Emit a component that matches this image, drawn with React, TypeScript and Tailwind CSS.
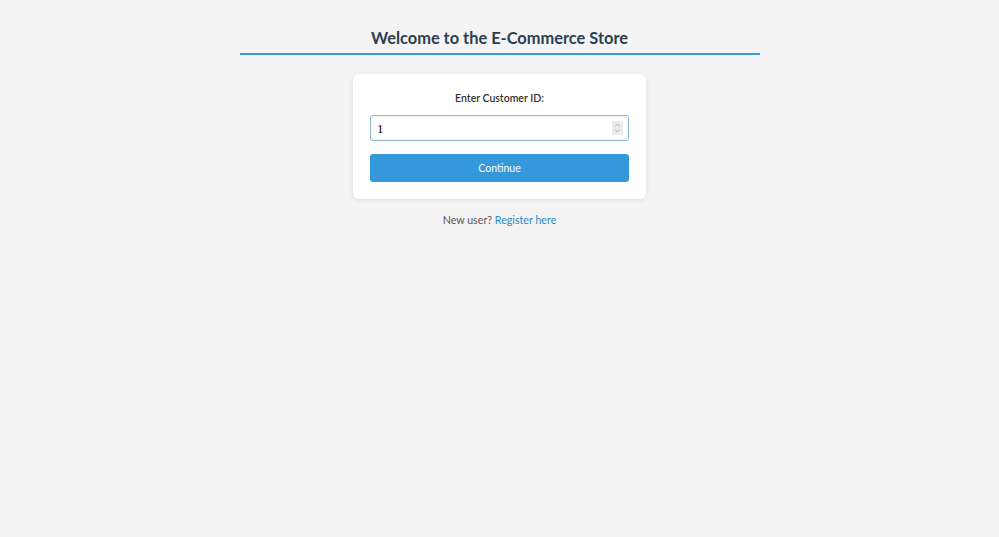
import React from "react";

export default function App() {
  return (
    <div className="min-h-[537px] w-full bg-[#f4f4f4]" style={{ fontFamily: 'Lato, "Open Sans", sans-serif' }}>
      <div className="mx-auto flex w-[520px] flex-col items-center pt-[27px]">
        <h1 className="w-full border-b-2 border-[#3498db] pb-[5px] text-center text-[16.4px] font-bold leading-[21px] text-[#2c3e50]">
          Welcome to the E-Commerce Store
        </h1>
        <div className="mt-[19px] flex w-[293px] flex-col rounded-[6px] bg-white px-[17px] pb-[17px] pt-[17px] shadow-[0_1px_5px_rgba(0,0,0,0.1)]">
          <label className="block text-center text-[10.5px] font-semibold leading-[14px] text-[#333]">Enter Customer ID:</label>
          <div className="relative mt-[10px] h-[26px]">
            <input
              type="text"
              defaultValue="1"
              className="block h-[26px] w-full rounded-[3px] border border-[#8bb9d6] bg-white px-[6px] pt-[1px] text-[13px] text-black outline-none shadow-[inset_0_0_2px_rgba(52,152,219,0.25)]"
              style={{ fontFamily: '"Liberation Serif", serif' }}
            />
            <div className="absolute right-[6px] top-[6px] flex h-[14px] w-[11px] flex-col items-center justify-center bg-[#ececec]">
              <svg width="7" height="10" viewBox="0 0 7 10" fill="none" stroke="#9a9a9a" strokeWidth="0.9">
                <path d="M1.2 3.5 L3.5 1.2 L5.8 3.5" />
                <path d="M1.2 6.5 L3.5 8.8 L5.8 6.5" />
              </svg>
            </div>
          </div>
          <button className="mt-[13px] block h-[28px] w-full rounded-[3px] bg-[#3498db] pt-[1px] text-[10.5px] text-white">Continue</button>
        </div>
        <p className="mt-[13px] text-[10.7px] leading-[16px] text-[#555]">
          New user? <span className="text-[#2e86c1]">Register here</span>
        </p>
      </div>
    </div>
  );
}
